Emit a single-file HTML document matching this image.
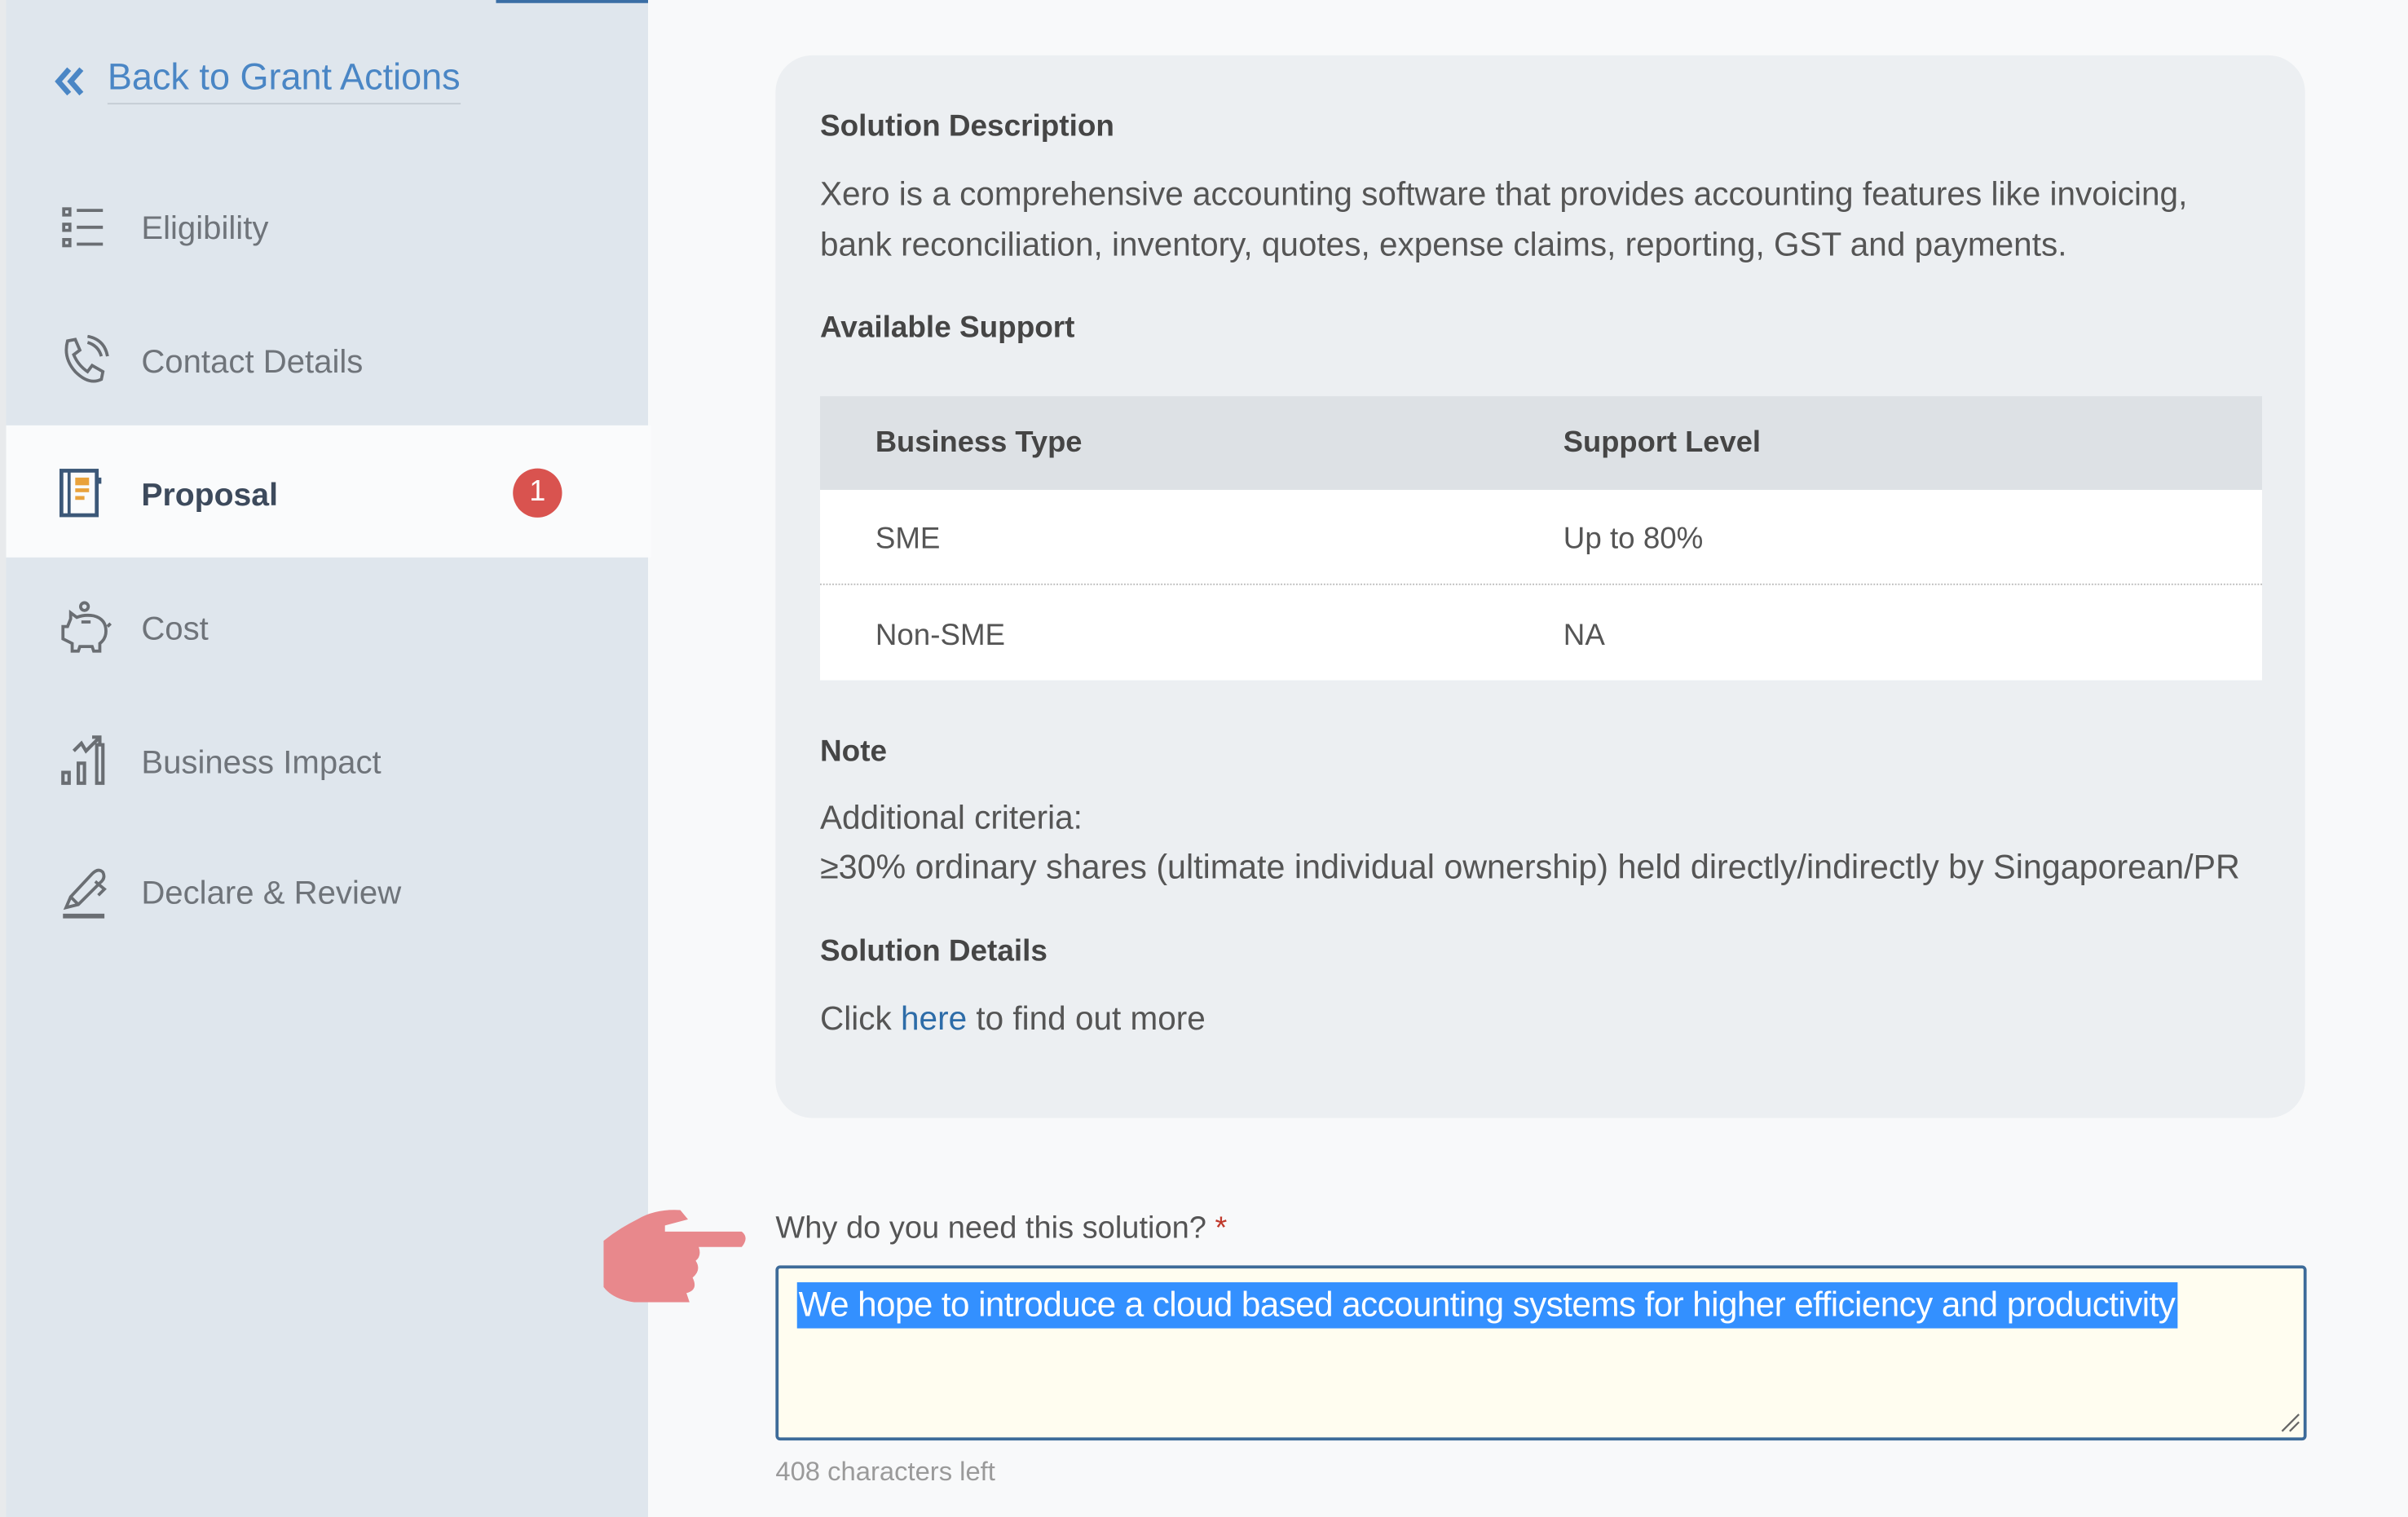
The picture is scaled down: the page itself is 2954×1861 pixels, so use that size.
<!DOCTYPE html>
<html><head><meta charset="utf-8"><style>
html,body{margin:0;padding:0;width:2954px;height:1861px;overflow:hidden;background:#f8f9fa}
#s{position:absolute;left:0;top:0;width:1568px;height:988px;transform:scale(1.8839);transform-origin:0 0;font-family:"Liberation Sans",sans-serif;background:#f8f9fa}
.a{position:absolute;white-space:nowrap}
.nav{position:absolute;left:92px;font-size:21.3px;color:#6f747a;transform:translateY(-50%);margin-top:1px}
.h{position:absolute;left:534px;font-size:19.6px;font-weight:bold;color:#454545;transform:translateY(-50%);margin-top:1px}
.p{position:absolute;left:534px;font-size:21.5px;color:#555;transform:translateY(-50%);white-space:nowrap;margin-top:1px}
svg{position:absolute}
</style></head><body><div id="s">
<div class="a" style="left:0;top:0;width:4px;height:988px;background:#e8eaec"></div>
<div class="a" style="left:4px;top:0;width:418px;height:988px;background:#dfe6ed"></div>
<div class="a" style="left:323px;top:0;width:99px;height:2px;background:#3a6ea5"></div>
<div class="a" style="left:4px;top:277px;width:420px;height:86px;background:#fafbfc"></div>
<svg style="left:34px;top:42px" width="24" height="22" viewBox="0 0 24 22"><path d="M11 3 L4 11 L11 19 M19 3 L12 11 L19 19" fill="none" stroke="#4a86c5" stroke-width="3.5"/></svg>
<div class="a" style="left:70px;top:37px;font-size:23.9px;color:#4a86c5;border-bottom:1px solid #c5ccd4;padding-bottom:2px">Back to Grant Actions</div>
<svg style="left:40px;top:134px" width="30" height="28" viewBox="0 0 30 28" fill="none" stroke="#6a6e73" stroke-width="2"><rect x="1.5" y="2" width="4" height="4"/><rect x="1.5" y="12" width="4" height="4"/><rect x="1.5" y="22" width="4" height="4"/><path d="M10 3h17M10 14h17M10 25h17"/></svg>
<div class="nav" style="top:148px">Eligibility</div>
<svg style="left:38px;top:218px" width="34" height="34" viewBox="0 0 34 34" fill="none" stroke="#6a6e73" stroke-width="2"><path d="M6 4 L11 3 L14 10 L10 13 Q13 20 19 24 L22 20 L29 24 L28 29 Q20 33 11 24 Q3 15 6 4Z"/><path d="M19 5 Q26 7 28 14 M19 1 Q30 3 32 14"/></svg>
<div class="nav" style="top:235px">Contact Details</div>
<svg style="left:38px;top:305px" width="30" height="32" viewBox="0 0 30 32"><rect x="2" y="1.5" width="23" height="29" fill="none" stroke="#3c5878" stroke-width="2.5"/><path d="M7 2v28" stroke="#3c5878" stroke-width="2"/><rect x="25" y="6" width="3" height="4" fill="#3c5878"/><rect x="11" y="6" width="9" height="5" fill="#e9a23b"/><rect x="11" y="13" width="9" height="2.5" fill="#e9a23b"/><rect x="11" y="18" width="6" height="2.5" fill="#e9a23b"/></svg>
<div class="nav" style="top:322px;font-weight:bold;color:#3d4a5c;font-size:20.8px">Proposal</div>
<div class="a" style="left:334px;top:305px;width:32px;height:32px;border-radius:50%;background:#d9534f;color:#fff;font-size:19px;text-align:center;line-height:32px">1</div>
<svg style="left:38px;top:391px" width="36" height="36" viewBox="0 0 36 36" fill="none" stroke="#6a6e73" stroke-width="2"><circle cx="17" cy="4" r="2.5"/><path d="M8 12 L8 8 L12 11 Q17 9 23 10 Q31 12 31 20 Q31 25 27 28 L27 33 L23 33 L22 30 L14 30 L13 33 L9 33 L9 28 L3 25 L3 17 L6 17 Z"/><path d="M15 14h6M32 17l2-2"/></svg>
<div class="nav" style="top:409px">Cost</div>
<svg style="left:38px;top:477px" width="34" height="36" viewBox="0 0 34 36" fill="none" stroke="#6a6e73" stroke-width="2.2"><rect x="3" y="26" width="4" height="7"/><rect x="13" y="20" width="4" height="13"/><rect x="25" y="8" width="4" height="25"/><path d="M10 12 L15 7 L18 12 L27 3 M22 3h5v5"/></svg>
<div class="nav" style="top:496px">Business Impact</div>
<svg style="left:38px;top:563px" width="34" height="36" viewBox="0 0 34 36" fill="none" stroke="#6a6e73" stroke-width="2"><path d="M5 28 L8 21 L22 6 Q26 2 29 5 Q31 9 27 12 L13 26 Z M8 21 L13 26 M24 11 L30 16 L26 20"/><path d="M3 33.5h27" stroke-width="3"/></svg>
<div class="nav" style="top:581px">Declare &amp; Review</div>

<div class="a" style="left:505px;top:36px;width:996px;height:692px;background:#eceff2;border-radius:24px"></div>
<div class="h" style="top:82px">Solution Description</div>
<div class="p" style="top:126px">Xero is a comprehensive accounting software that provides accounting features like invoicing,</div>
<div class="p" style="top:159px">bank reconciliation, inventory, quotes, expense claims, reporting, GST and payments.</div>
<div class="h" style="top:213px">Available Support</div>
<div class="a" style="left:534px;top:258px;width:939px;height:61px;background:#dde1e5"></div>
<div class="a" style="left:534px;top:319px;width:939px;height:124px;background:#fff"></div>
<div class="a" style="left:534px;top:380px;width:939px;border-top:1px dotted #bbb"></div>
<div class="a" style="left:570px;top:278px;font-size:19.3px;font-weight:bold;color:#454545">Business Type</div>
<div class="a" style="left:1018px;top:278px;font-size:19.3px;font-weight:bold;color:#454545">Support Level</div>
<div class="a" style="left:570px;top:340px;font-size:19.5px;color:#555">SME</div>
<div class="a" style="left:1018px;top:340px;font-size:19.5px;color:#555">Up to 80%</div>
<div class="a" style="left:570px;top:403px;font-size:19.5px;color:#555">Non-SME</div>
<div class="a" style="left:1018px;top:403px;font-size:19.5px;color:#555">NA</div>
<div class="h" style="top:489px">Note</div>
<div class="p" style="top:532px">Additional criteria:</div>
<div class="p" style="top:564px;font-size:21.9px">≥30% ordinary shares (ultimate individual ownership) held directly/indirectly by Singaporean/PR</div>
<div class="h" style="top:619px">Solution Details</div>
<div class="p" style="top:663px">Click <span style="color:#2d6ca8">here</span> to find out more</div>

<svg style="left:393px;top:786px" width="96" height="64" viewBox="0 0 96 64"><path d="M0 22 Q10 14 22 8 Q34 1 50 2 L55 8 L40 12 L40 16 L90 16 Q95 20 90 26 L62 26 Q64 32 60 35 Q64 41 58 46 Q62 54 54 56 L56 62 L20 62 Q6 60 0 52 Z" fill="#e8888c"/></svg>
<div class="a" style="left:505px;top:789px;font-size:20.2px;color:#555">Why do you need this solution? <span style="color:#c0392b">*</span></div>
<div class="a" style="left:505px;top:824px;width:993px;height:110px;border:2px solid #3d6b99;border-radius:3px;background:#fffdf0"></div>
<div class="a" style="left:519px;top:835px;width:899px;height:30px;background:#3390ff"></div>
<div class="a" style="left:520px;top:837px;font-size:22.4px;color:#fff;letter-spacing:-0.3px">We hope to introduce a cloud based accounting systems for higher efficiency and productivity</div>
<svg style="left:1483px;top:918px" width="16" height="16" viewBox="0 0 16 16"><path d="M3 14L14 3M8 14L14 8" stroke="#666" stroke-width="1.2"/></svg>
<div class="a" style="left:505px;top:948px;font-size:17.4px;color:#9a9a9a">408 characters left</div>
</div></body></html>
